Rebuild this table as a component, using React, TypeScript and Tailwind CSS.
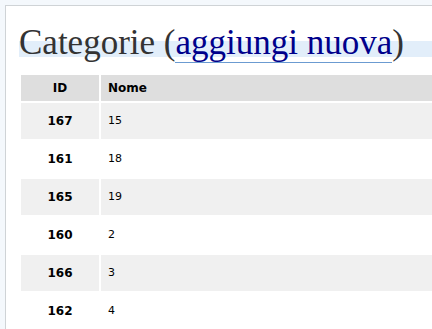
const rows = [
  { id: "167", nome: "15" },
  { id: "161", nome: "18" },
  { id: "165", nome: "19" },
  { id: "160", nome: "2" },
  { id: "166", nome: "3" },
  { id: "162", nome: "4" },
];

const App = () => {
  return (
    <div className="w-[432px] h-[329px] overflow-hidden bg-[#f4f8fc] pl-[5px] pt-[5px]">
      <div className="w-[600px] h-[500px] bg-white border-l border-t border-[#cfd3d6] pl-[13px] pt-[18px]">
        <h1 className="font-['Liberation_Serif',serif] text-[35px] leading-[37px] text-[#333] bg-[linear-gradient(to_bottom,transparent_17px,#e2eefa_17px,#e2eefa_33px,transparent_33px)] whitespace-nowrap">
          Categorie (
          <a className="text-[#00008b] border-b border-[#6b9bd1]">aggiungi nuova</a>)
        </h1>
        <table className="mt-[12px] border-separate border-spacing-[2px] font-['DejaVu_Sans',sans-serif] text-black">
          <thead>
            <tr className="bg-[#dedede]">
              <th className="w-[78px] h-[26px] text-[12px] font-bold text-center">ID</th>
              <th className="w-[500px] h-[26px] text-[12px] font-bold text-left pl-[7px]">Nome</th>
            </tr>
          </thead>
          <tbody>
            {rows.map((r, i) => (
              <tr key={r.id} className={i % 2 === 0 ? "bg-[#f0f0f0]" : "bg-white"}>
                <td className="h-[36px] text-[12px] font-bold text-center">{r.id}</td>
                <td className="h-[36px] text-[11px] pl-[7px]">{r.nome}</td>
              </tr>
            ))}
          </tbody>
        </table>
      </div>
    </div>
  );
};

export default App;
